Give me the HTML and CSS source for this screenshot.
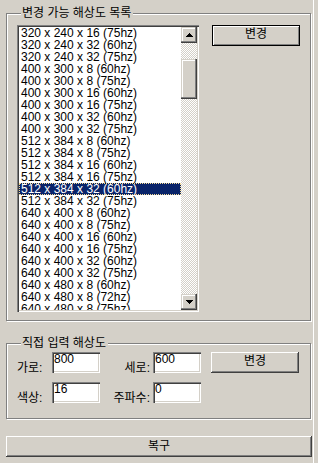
FILE: index.html
```html
<!DOCTYPE html>
<html lang="ko">
<head>
  <meta charset="UTF-8">
  <meta name="viewport" content="width=device-width, initial-scale=1.0">
  <title>해상도 변경</title>
  <link rel="stylesheet" href="styles.css">
</head>
<body>
  <div class="group group-list">
    <div class="group-title">변경 가능 해상도 목록</div>
    <div class="list-row">
      <div class="listbox">
        <ul class="items">
          <li>320 x 240 x 16 (75hz)</li>
          <li>320 x 240 x 32 (60hz)</li>
          <li>320 x 240 x 32 (75hz)</li>
          <li>400 x 300 x 8 (60hz)</li>
          <li>400 x 300 x 8 (75hz)</li>
          <li>400 x 300 x 16 (60hz)</li>
          <li>400 x 300 x 16 (75hz)</li>
          <li>400 x 300 x 32 (60hz)</li>
          <li>400 x 300 x 32 (75hz)</li>
          <li>512 x 384 x 8 (60hz)</li>
          <li>512 x 384 x 8 (75hz)</li>
          <li>512 x 384 x 16 (60hz)</li>
          <li>512 x 384 x 16 (75hz)</li>
          <li class="selected">512 x 384 x 32 (60hz)</li>
          <li>512 x 384 x 32 (75hz)</li>
          <li>640 x 400 x 8 (60hz)</li>
          <li>640 x 400 x 8 (75hz)</li>
          <li>640 x 400 x 16 (60hz)</li>
          <li>640 x 400 x 16 (75hz)</li>
          <li>640 x 400 x 32 (60hz)</li>
          <li>640 x 400 x 32 (75hz)</li>
          <li>640 x 480 x 8 (60hz)</li>
          <li>640 x 480 x 8 (72hz)</li>
          <li>640 x 480 x 8 (75hz)</li>
        </ul>
        <div class="scrollbar">
          <div class="sb-btn">
            <svg width="7" height="4" viewBox="0 0 7 4" shape-rendering="crispEdges">
              <rect x="3" y="0" width="1" height="1"/>
              <rect x="2" y="1" width="3" height="1"/>
              <rect x="1" y="2" width="5" height="1"/>
              <rect x="0" y="3" width="7" height="1"/>
            </svg>
          </div>
          <div class="sb-track">
            <div class="sb-thumb"></div>
          </div>
          <div class="sb-btn">
            <svg width="7" height="4" viewBox="0 0 7 4" shape-rendering="crispEdges">
              <rect x="0" y="0" width="7" height="1"/>
              <rect x="1" y="1" width="5" height="1"/>
              <rect x="2" y="2" width="3" height="1"/>
              <rect x="3" y="3" width="1" height="1"/>
            </svg>
          </div>
        </div>
      </div>
      <button class="btn btn-default">변경</button>
    </div>
  </div>

  <div class="group group-input">
    <div class="group-title">직접 입력 해상도</div>
    <div class="input-grid">
      <label class="lbl">가로:</label>
      <input class="field" type="text" value="800">
      <label class="lbl lbl-right">세로:</label>
      <input class="field" type="text" value="600">
      <button class="btn btn-apply">변경</button>

      <label class="lbl">색상:</label>
      <input class="field" type="text" value="16">
      <label class="lbl lbl-right">주파수:</label>
      <input class="field" type="text" value="0">
    </div>
  </div>

  <button class="btn btn-restore">복구</button>
</body>
</html>
```

FILE: styles.css
```css
* {
  margin: 0;
  padding: 0;
  box-sizing: border-box;
}

html {
  background: #d4d0c8;
}

body {
  font-family: 'Liberation Sans', 'Noto Sans CJK KR', sans-serif;
  font-size: 12px;
  line-height: 12px;
  color: #000;
  padding-left: 6px;
  width: 314px;
  height: 463px;
  border-right: 1px solid #fff;
  overflow: hidden;
}

/* Etched group box */
.group {
  width: 305px;
  border: 1px solid #808080;
  box-shadow: inset 1px 1px 0 #fff, 1px 1px 0 #fff;
}

.group-title {
  width: fit-content;
  margin: -7px 0 0 4px;
  padding: 0 2px 0 1px;
  background: #d4d0c8;
  line-height: 12px;
}

.group-list {
  margin-top: 13px;
  padding: 0 0 8px 10px;
}

.list-row {
  display: flex;
  align-items: flex-start;
  gap: 13px;
  margin-top: 6px;
}

/* List box */
.listbox {
  display: flex;
  width: 182px;
  height: 287px;
  padding: 2px;
  background: #fff;
  box-shadow: inset 1px 1px 0 #808080, inset 2px 2px 0 #404040,
              inset -1px -1px 0 #fff, inset -2px -2px 0 #d4d0c8;
}

.items {
  list-style: none;
  flex: 1;
  overflow: hidden;
}

.items li {
  height: 12px;
  line-height: 12px;
  padding-left: 2px;
  white-space: nowrap;
}

.items li.selected {
  background: #0a246a;
  color: #fff;
  outline: 1px dotted #f5db95;
  outline-offset: -1px;
}

.scrollbar {
  width: 16px;
  display: flex;
  flex-direction: column;
}

.sb-btn {
  height: 16px;
  display: flex;
  align-items: center;
  justify-content: center;
  background: #d4d0c8;
  box-shadow: inset -1px -1px 0 #404040, inset -2px -2px 0 #808080,
              inset 1px 1px 0 #d4d0c8, inset 2px 2px 0 #fff;
}

.sb-btn svg {
  fill: #000;
}

.sb-track {
  flex: 1;
  padding-top: 16px;
  background-color: #fff;
  background-image: conic-gradient(#d4d0c8 25%, #fff 0 50%, #d4d0c8 0 75%, #fff 0);
  background-size: 2px 2px;
}

.sb-thumb {
  height: 40px;
  background: #d4d0c8;
  box-shadow: inset -1px -1px 0 #404040, inset -2px -2px 0 #808080,
              inset 1px 1px 0 #d4d0c8, inset 2px 2px 0 #fff;
}

/* Buttons */
.btn {
  font-family: inherit;
  font-size: 12px;
  line-height: 12px;
  color: #000;
  background: #d4d0c8;
  border: none;
  height: 21px;
  padding: 0 0 3px;
  box-shadow: inset -1px -1px 0 #404040, inset 1px 1px 0 #fff,
              inset -2px -2px 0 #808080;
}

.btn-default {
  width: 88px;
  border: 1px solid #000;
  box-shadow: inset 1px 1px 0 #fff, inset -1px -1px 0 #808080;
}

.btn-apply {
  width: 88px;
  margin-left: 10px;
}

.btn-restore {
  display: block;
  width: 306px;
  margin-top: 17px;
  padding-bottom: 1px;
}

/* Direct input */
.group-input {
  margin-top: 22px;
  padding: 0 0 15px 10px;
}

.input-grid {
  display: grid;
  grid-template-columns: 35px 48px 53px 48px 98px;
  grid-template-rows: 21px 21px;
  row-gap: 9px;
  margin-top: 3px;
}

.lbl {
  align-self: end;
  margin-bottom: -1px;
  line-height: 12px;
}

.lbl-right {
  text-align: right;
  padding-right: 3px;
}

.field {
  width: 48px;
  height: 21px;
  border: none;
  outline: none;
  background: #fff;
  font-family: inherit;
  font-size: 12px;
  line-height: 12px;
  padding: 1px 2px 8px;
  color: #000;
  box-shadow: inset 1px 1px 0 #808080, inset 2px 2px 0 #404040,
              inset -1px -1px 0 #fff, inset -2px -2px 0 #d4d0c8;
}
```
